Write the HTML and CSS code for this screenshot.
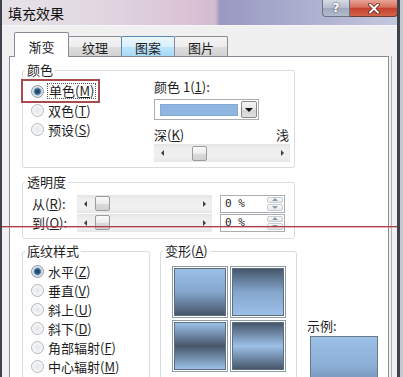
FILE: index.html
```html
<!DOCTYPE html>
<html lang="zh-CN">
<head>
  <meta charset="UTF-8">
  <title>填充效果</title>
  <link rel="stylesheet" href="styles.css">
</head>
<body>

  <div class="window">

    <!-- title bar -->
    <div class="titlebar">
      <span class="title">填充效果</span>
      <div class="caption-buttons">
        <span class="cap-btn help">?</span>
        <span class="cap-btn close">
          <svg width="14" height="11" viewBox="0 0 14 11"><path d="M3 1.5 L11 9.5 M11 1.5 L3 9.5" stroke="#5a1a12" stroke-width="3.4" stroke-linecap="round"/><path d="M3 1.5 L11 9.5 M11 1.5 L3 9.5" stroke="#fff" stroke-width="2" stroke-linecap="round"/></svg>
        </span>
      </div>
    </div>

    <div class="client">

      <!-- tabs -->
      <div class="tabs">
        <span class="tab active">渐变</span>
        <span class="tab">纹理</span>
        <span class="tab hover">图案</span>
        <span class="tab">图片</span>
      </div>

      <div class="panel">

        <!-- colour -->
        <div class="group group-color">
          <div class="group-title">颜色</div>
          <div class="color-body">
            <div class="radio-list">
              <div class="radio-row marked"><span class="radio checked"></span><span class="focus">单色(<u>M</u>)</span></div>
              <div class="radio-row"><span class="radio"></span><span>双色(<u>T</u>)</span></div>
              <div class="radio-row"><span class="radio"></span><span>预设(<u>S</u>)</span></div>
            </div>
            <div class="color-side">
              <div class="line">颜色 1(<u>1</u>):</div>
              <div class="combo">
                <span class="swatch"></span>
                <span class="combo-btn"><i class="tri-down"></i></span>
              </div>
              <div class="line shade-labels"><span>深(<u>K</u>)</span><span>浅</span></div>
              <div class="hscroll">
                <span class="arrow"><i class="tri-left"></i></span>
                <span class="thumb thumb-shade"></span>
                <span class="arrow end"><i class="tri-right"></i></span>
              </div>
            </div>
          </div>
        </div>

        <!-- transparency -->
        <div class="group group-trans">
          <div class="group-title">透明度</div>
          <div class="trans-rows">
            <div class="trans-row">
              <span class="trans-label">从(<u>R</u>):</span>
              <div class="hscroll short">
                <span class="arrow"><i class="tri-left"></i></span>
                <span class="thumb thumb-trans"></span>
                <span class="arrow end"><i class="tri-right"></i></span>
              </div>
              <div class="spinbox">
                <span>0 %</span>
                <span class="spin"><span><i class="tri-up"></i></span><span><i class="tri-down small"></i></span></span>
              </div>
            </div>
            <div class="trans-row">
              <span class="trans-label">到(<u>O</u>):</span>
              <div class="hscroll short">
                <span class="arrow"><i class="tri-left"></i></span>
                <span class="thumb thumb-trans"></span>
                <span class="arrow end"><i class="tri-right"></i></span>
              </div>
              <div class="spinbox">
                <span>0 %</span>
                <span class="spin"><span><i class="tri-up"></i></span><span><i class="tri-down small"></i></span></span>
              </div>
            </div>
          </div>
        </div>

        <div class="bottom-row">

          <!-- shading styles -->
          <div class="group group-pattern">
            <div class="group-title">底纹样式</div>
            <div class="radio-list">
              <div class="radio-row"><span class="radio checked"></span><span>水平(<u>Z</u>)</span></div>
              <div class="radio-row"><span class="radio"></span><span>垂直(<u>V</u>)</span></div>
              <div class="radio-row"><span class="radio"></span><span>斜上(<u>U</u>)</span></div>
              <div class="radio-row"><span class="radio"></span><span>斜下(<u>D</u>)</span></div>
              <div class="radio-row"><span class="radio"></span><span>角部辐射(<u>F</u>)</span></div>
              <div class="radio-row"><span class="radio"></span><span>中心辐射(<u>M</u>)</span></div>
            </div>
          </div>

          <!-- variants -->
          <div class="group group-variant">
            <div class="group-title">变形(<u>A</u>)</div>
            <div class="variants">
              <span class="variant"><span class="v1"></span></span>
              <span class="variant"><span class="v2"></span></span>
              <span class="variant"><span class="v3"></span></span>
              <span class="variant"><span class="v4"></span></span>
            </div>
          </div>

          <!-- sample -->
          <div class="sample">
            <div class="line">示例:</div>
            <div class="sample-box"></div>
          </div>

        </div>
      </div>
    </div>

    <!-- red annotation line drawn over the screenshot -->
    <div class="mark-line"></div>
  </div>

</body>
</html>
```

FILE: styles.css
```css
* {
  box-sizing: border-box;
}

body {
  margin: 0;
  width: 403px;
  height: 377px;
  overflow: hidden;
  background: #c4c8d0;
  font-family: "Noto Sans CJK SC", "Noto Sans", sans-serif;
  font-size: 13px;
  color: #1e1e1e;
}

u {
  text-decoration: underline;
  text-underline-offset: 1px;
}

.window {
  position: relative;
  width: 400px;
  height: 377px;
  display: flex;
  flex-direction: column;
  overflow: hidden;
  border-left: 2px solid #3e424a;
  border-right: 3px solid #3e424a;
  background: #f0f0f0;
}

/* title bar */
.titlebar {
  flex: none;
  height: 26px;
  display: flex;
  align-items: flex-start;
  border-bottom: 1px solid #f6f6fa;
  background: linear-gradient(90deg, #e6e2e8 0, #e2d8e2 90px, #dac4d6 180px, #d4bcd0 213px, #9a98c2 218px, #a2a4c8 260px, #b2b6d2 330px, #c4c8de 100%);
}

.title {
  padding: 5px 0 0 6px;
  font-size: 14px;
  line-height: 16px;
  color: #111;
}

.caption-buttons {
  display: flex;
  margin-left: auto;
  margin-right: -1px;
}

.cap-btn {
  height: 17px;
  display: flex;
  align-items: center;
  justify-content: center;
  border: 1px solid #6c7284;
  border-top: none;
}

.help {
  width: 28px;
  border-radius: 0 0 0 4px;
  background: linear-gradient(#d6dae6, #b6bccc 50%, #a0a8bc 51%, #b2bacc);
  color: #fff;
  font-family: "DejaVu Sans", sans-serif;
  font-weight: bold;
  font-size: 12px;
  text-shadow: 0 0 2px #2a3040;
}

.close {
  width: 48px;
  border-color: #6e3a34;
  border-left: none;
  border-radius: 0 0 4px 0;
  background: linear-gradient(#e8a496, #d8705e 45%, #c6412e 52%, #d2644c);
}

/* client area */
.client {
  flex: 1;
  display: flex;
  flex-direction: column;
  padding: 6px 8px 0 7px;
  min-height: 0;
}

.tabs {
  flex: none;
  height: 24px;
  display: flex;
  align-items: flex-end;
  margin-left: 5px;
  position: relative;
  z-index: 1;
}

.tab {
  width: 54px;
  height: 20px;
  margin-left: -1px;
  padding-top: 4px;
  line-height: 14px;
  text-align: center;
  border: 1px solid #898c95;
  border-bottom: none;
  border-radius: 2px 2px 0 0;
  background: linear-gradient(#f4f4f4, #ececec 50%, #dedede 51%, #d2d2d2);
}

.tab.active {
  width: 55px;
  height: 25px;
  margin-left: 0;
  margin-bottom: -1px;
  padding-top: 7px;
  background: #fff;
  position: relative;
  z-index: 2;
}

.tab.hover {
  border-color: #5a8ab4;
  background: linear-gradient(#eaf6fd, #d9f0fc 50%, #bee6fd 51%, #a7d9f5);
}

.panel {
  flex: 1;
  min-height: 0;
  overflow: hidden;
  padding-left: 12px;
  background: #fff;
  border: 1px solid #898c95;
  border-bottom: none;
  box-shadow: 2px 0 0 #f0f0f0, 3px 0 0 #b4b4b4;
}

/* group boxes */
.group {
  border: 1px solid #d5dde3;
  border-radius: 3px;
}

.group-title {
  width: fit-content;
  margin: -8px 0 0 2px;
  padding: 0 2px;
  line-height: 14px;
  background: #fff;
  white-space: nowrap;
}

.line {
  line-height: 14px;
  white-space: nowrap;
}

.group-color {
  width: 273px;
  height: 98px;
  margin-top: 13px;
}

.color-body {
  display: flex;
}

.radio-list {
  width: 131px;
  padding-top: 4px;
}

.radio-row {
  height: 19px;
  display: flex;
  align-items: center;
  gap: 4px;
  padding-left: 8px;
  line-height: 14px;
  white-space: nowrap;
}

.radio-row.marked {
  width: fit-content;
  height: 20px;
  padding-right: 2px;
  outline: 2px solid #a94a4d;
}

.focus {
  margin-left: -1px;
  padding: 0 1px;
  border: 1px dotted #555;
}

.radio {
  flex: none;
  width: 13px;
  height: 13px;
  border-radius: 50%;
  border: 1px solid #b2b8be;
  background: radial-gradient(circle, #e4e6e8 0, #eef0f2 45%, #fafafa 80%);
}

.radio.checked {
  border-color: #8c96a0;
  background: radial-gradient(circle, #1e3c5a 0, #2f5a80 2.5px, #7aa4c8 3.5px, #dfe6ec 4.5px, #f2f4f6 100%);
}

.color-side {
  width: 136px;
  padding-top: 3px;
}

.combo {
  width: 105px;
  height: 21px;
  margin-top: 5px;
  display: flex;
  align-items: center;
  padding: 0 1px 0 5px;
  border: 1px solid #abadb3;
}

.swatch {
  width: 78px;
  height: 12px;
  background: #8fb5e1;
  border: 1px solid #86a8d2;
}

.combo-btn {
  width: 16px;
  height: 17px;
  margin-left: auto;
  display: flex;
  align-items: center;
  justify-content: center;
  border: 1px solid #8a8a8a;
  border-radius: 2px;
  background: linear-gradient(#f6f6f6, #e4e4e4 50%, #d4d4d4 51%, #e0e0e0);
}

.shade-labels {
  margin-top: 8px;
  display: flex;
  justify-content: space-between;
  padding-right: 1px;
}

/* scroll bars */
.hscroll {
  width: 136px;
  height: 18px;
  margin-top: 2px;
  display: flex;
  align-items: center;
  background: linear-gradient(#e4e4e4, #eeeeee 25%, #f0f0f0 75%, #e6e6e6);
}

.hscroll.short {
  width: 135px;
  margin-top: 0;
}

.arrow {
  width: 16px;
  height: 18px;
  display: flex;
  align-items: center;
  justify-content: center;
}

.arrow.end {
  margin-left: auto;
}

.thumb {
  width: 15px;
  height: 15px;
  border: 1px solid #9c9c9c;
  border-radius: 2px;
  background: linear-gradient(#fafafa, #ececec 50%, #dadada 51%, #d2d2d2);
}

.thumb-shade {
  margin-left: 22px;
}

.thumb-trans {
  margin-left: 2px;
}

.tri-left,
.tri-right,
.tri-up,
.tri-down {
  display: block;
  width: 0;
  height: 0;
}

.tri-left {
  border-top: 3px solid transparent;
  border-bottom: 3px solid transparent;
  border-right: 3px solid #404040;
}

.tri-right {
  border-top: 3px solid transparent;
  border-bottom: 3px solid transparent;
  border-left: 3px solid #404040;
}

.tri-down {
  border-left: 4px solid transparent;
  border-right: 4px solid transparent;
  border-top: 4px solid #111;
}

.tri-down.small {
  border-left-width: 3px;
  border-right-width: 3px;
  border-top: 3px solid #8a9aa8;
}

.tri-up {
  border-left: 3px solid transparent;
  border-right: 3px solid transparent;
  border-bottom: 3px solid #8a9aa8;
}

/* transparency */
.group-trans {
  width: 273px;
  height: 57px;
  margin-top: 14px;
}

.trans-rows {
  padding-top: 5px;
}

.trans-row {
  height: 19px;
  display: flex;
  align-items: center;
  padding-left: 9px;
}

.trans-label {
  width: 45px;
  line-height: 14px;
  white-space: nowrap;
}

.spinbox {
  width: 65px;
  height: 18px;
  margin-left: 8px;
  display: flex;
  align-items: center;
  padding: 0 1px 0 4px;
  border: 1px solid #abadb3;
  font-family: "DejaVu Sans Mono", monospace;
  font-size: 11px;
  color: #222;
}

.spin {
  width: 16px;
  height: 14px;
  margin-left: auto;
  display: flex;
  flex-direction: column;
  gap: 1px;
}

.spin span {
  flex: 1;
  display: flex;
  align-items: center;
  justify-content: center;
  border: 1px solid #c6ccd2;
  border-radius: 2px;
  background: linear-gradient(#f8f8f8, #e6e8ea);
}

/* bottom row */
.bottom-row {
  display: flex;
  align-items: flex-start;
  margin-top: 12px;
}

.group-pattern {
  width: 128px;
  height: 128px;
}

.group-variant {
  width: 137px;
  height: 128px;
  margin-left: 10px;
}

.variants {
  display: grid;
  grid-template-columns: 56px 56px;
  grid-auto-rows: 52px;
  gap: 2px;
  margin: 8px 0 0 11px;
}

.variant {
  padding: 1px;
  border: 1px solid #8e9ca8;
  background: #fff;
}

.variant span {
  display: block;
  height: 100%;
  border: 1px solid #5e6e80;
}

.v1 {
  background: linear-gradient(#9cc0e8, #84a6cc 50%, #46566a);
}

.v2 {
  background: linear-gradient(#46566a, #84a6cc 50%, #9cc0e8);
}

.v3 {
  background: linear-gradient(#9cc0e8, #46566a 50%, #9cc0e8);
}

.v4 {
  background: linear-gradient(#46566a, #9cc0e8 50%, #46566a);
}

.sample {
  margin-left: 10px;
  padding-top: 68px;
}

.sample-box {
  width: 68px;
  height: 44px;
  margin: 3px 0 0 3px;
  border: 1px solid #6a7a8c;
  background: linear-gradient(#9cc0e6, #8aaed4 70%, #7a98bc);
}

/* annotation */
.mark-line {
  position: absolute;
  left: -2px;
  top: 226px;
  width: 403px;
  height: 1px;
  background: #ad3f4c;
  box-shadow: 0 1px 0 rgba(200, 110, 120, 0.5);
}
```
